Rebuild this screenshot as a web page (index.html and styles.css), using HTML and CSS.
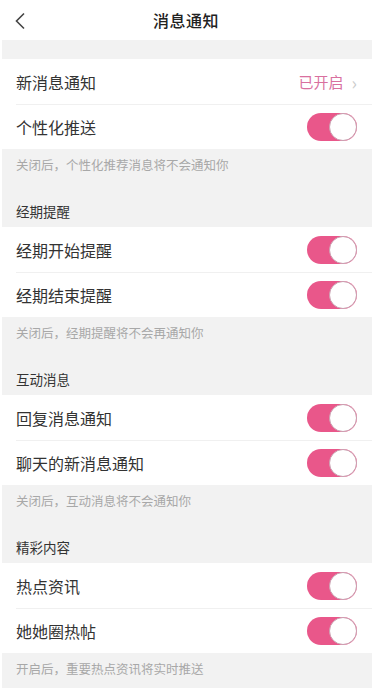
FILE: index.html
```html
<!DOCTYPE html>
<html lang="zh-CN">
<head>
    <meta charset="UTF-8">
    <title>消息通知</title>
    <link rel="stylesheet" href="styles.css">
</head>
<body>
<div class="page">
    <div class="nav">
        <span class="back">
            <svg width="12" height="18" viewBox="0 0 12 18"><path d="M10 1.5 L2.5 9 L10 16.5" fill="none" stroke="#444" stroke-width="1.6"/></svg>
        </span>
        <span class="nav-title">消息通知</span>
    </div>
    <div class="gap"></div>

    <ul class="group">
        <li class="row">
            <span class="label">新消息通知</span>
            <span class="status">已开启<i class="arrow">&#8250;</i></span>
        </li>
        <li class="row">
            <span class="label">个性化推送</span>
            <span class="switch on"></span>
        </li>
    </ul>
    <div class="tip">
        <p class="tip-text">关闭后，个性化推荐消息将不会通知你</p>
        <p class="tip-title">经期提醒</p>
    </div>

    <ul class="group">
        <li class="row">
            <span class="label">经期开始提醒</span>
            <span class="switch on"></span>
        </li>
        <li class="row">
            <span class="label">经期结束提醒</span>
            <span class="switch on"></span>
        </li>
    </ul>
    <div class="tip">
        <p class="tip-text">关闭后，经期提醒将不会再通知你</p>
        <p class="tip-title">互动消息</p>
    </div>

    <ul class="group">
        <li class="row">
            <span class="label">回复消息通知</span>
            <span class="switch on"></span>
        </li>
        <li class="row">
            <span class="label">聊天的新消息通知</span>
            <span class="switch on"></span>
        </li>
    </ul>
    <div class="tip">
        <p class="tip-text">关闭后，互动消息将不会通知你</p>
        <p class="tip-title">精彩内容</p>
    </div>

    <ul class="group">
        <li class="row">
            <span class="label">热点资讯</span>
            <span class="switch on"></span>
        </li>
        <li class="row">
            <span class="label">她她圈热帖</span>
            <span class="switch on"></span>
        </li>
    </ul>
    <div class="tip last">
        <p class="tip-text">开启后，重要热点资讯将实时推送</p>
    </div>
</div>
</body>
</html>
```

FILE: styles.css
```css
html,body{
    margin:0;
    padding:0;
    background:#fff;
}
body{
    font-family:"Noto Sans CJK SC","Noto Sans",sans-serif;
    color:#333;
}
ul{
    margin:0;
    padding:0;
    list-style:none;
}
p{
    margin:0;
}
.page{
    width:372px;
    height:688px;
    overflow:hidden;
}
.nav{
    height:40px;
    display:flex;
    align-items:center;
    justify-content:center;
    position:relative;
}
.back{
    position:absolute;
    left:14px;
    top:11px;
    height:18px;
}
.nav-title{
    font-size:16px;
    font-weight:500;
    color:#222;
    letter-spacing:0.5px;
}
.gap{
    height:19px;
    margin-left:2px;
    background:#f2f2f2;
}
.group .row{
    height:44px;
    margin-left:16px;
    padding-right:15px;
    display:flex;
    align-items:center;
    justify-content:space-between;
    border-bottom:1px solid #f0f0f0;
}
.group .row:first-child{
    height:45px;
}
.group .row:last-child{
    border-bottom:0;
}
.label{
    font-size:16px;
    color:#333;
}
.status{
    font-size:15px;
    color:#d9709f;
    display:flex;
    align-items:center;
}
.arrow{
    font-style:normal;
    color:#ccc;
    font-size:18px;
    margin-left:8px;
    line-height:1;
}
.switch{
    width:50px;
    height:28px;
    border-radius:14px;
    background:#e9578a;
    position:relative;
    box-sizing:border-box;
}
.switch::after{
    content:'';
    position:absolute;
    right:0;
    top:0;
    width:28px;
    height:28px;
    border-radius:50%;
    background:#fff;
    border:1px solid #c9a0b0;
    box-sizing:border-box;
}
.tip{
    height:78px;
    margin-left:2px;
    padding-left:14px;
    background:#f2f2f2;
    box-sizing:border-box;
}
.tip-text{
    padding-top:7px;
    font-size:12.5px;
    line-height:18px;
    color:#a8a8a8;
}
.tip-title{
    margin-top:28px;
    font-size:13.5px;
    line-height:18px;
    color:#333;
}
.tip.last{
    height:40px;
}
```
